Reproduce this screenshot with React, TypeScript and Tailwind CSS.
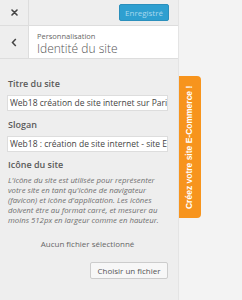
import React from "react";

export default function App() {
  return (
    <div
      className="w-[242px] h-[300px] flex bg-[#f3f3f3] overflow-hidden"
      style={{ fontFamily: '"Open Sans", "Liberation Sans", sans-serif' }}
    >
      {/* Left customizer panel */}
      <div className="w-[178px] h-full bg-[#eeeeee] flex flex-col shrink-0">
        {/* Top bar */}
        <div className="h-[26px] flex items-center border-b border-[#dddddd] shrink-0">
          <div className="w-[29px] h-full flex items-center justify-center border-r border-[#dddddd]">
            <svg width="7" height="7" viewBox="0 0 7 7">
              <path d="M1 1 L6 6 M6 1 L1 6" stroke="#444" strokeWidth="1.6" strokeLinecap="round" />
            </svg>
          </div>
          <div className="flex-1" />
          <div className="mr-[9px] w-[50px] h-[17px] rounded-[2px] bg-[#2e9fd0] border border-[#2a8fbc] flex items-center justify-center text-[8px] text-[#a8d8ee]">
            Enregistré
          </div>
        </div>
        {/* Header */}
        <div className="h-[33px] flex border-b border-[#dddddd] shrink-0">
          <div className="w-[29px] h-full flex items-center justify-center border-r border-[#dddddd]">
            <svg width="6" height="9" viewBox="0 0 6 9">
              <path d="M4.8 1 L1.5 4.5 L4.8 8" stroke="#444" strokeWidth="1.5" fill="none" />
            </svg>
          </div>
          <div className="flex-1 bg-white pl-[8px] pt-[6px] flex flex-col">
            <span className="text-[7.5px] leading-[9px] text-[#666]">Personnalisation</span>
            <span className="text-[12px] leading-[15px] font-light text-[#555]">Identité du site</span>
          </div>
        </div>
        {/* Content */}
        <div className="flex flex-col pl-[7px] pr-[10px] pt-[19px]">
          <div className="text-[9px] leading-[12px] font-semibold text-[#5a5a5a] pl-[1px]">Titre du site</div>
          <div className="mt-[5px] h-[16px] bg-white border border-[#dddddd] flex items-center pl-[2px] overflow-hidden whitespace-nowrap text-[8.5px] text-[#444]">
            Web18 création de site internet sur Paris
          </div>
          <div className="mt-[8px] text-[9px] leading-[12px] font-semibold text-[#5a5a5a] pl-[1px]">Slogan</div>
          <div className="mt-[5px] h-[16px] bg-white border border-[#dddddd] flex items-center pl-[2px] overflow-hidden whitespace-nowrap text-[8.5px] text-[#444]">
            Web18 : création de site internet - site E-Commerce
          </div>
          <div className="mt-[7px] text-[9px] leading-[12px] font-semibold text-[#5a5a5a] pl-[1px]">Icône du site</div>
          <div className="mt-[4px] pl-[1px] text-[7.8px] leading-[10px] italic text-[#6f6f6f] whitespace-nowrap">
            L'icône du site est utilisée pour représenter
            <br />
            votre site en tant qu'icône de navigateur
            <br />
            (favicon) et icône d'application. Les icônes
            <br />
            doivent être au format carré, et mesurer au
            <br />
            moins 512px en largeur comme en hauteur.
          </div>
          <div className="mt-[14px] text-center text-[8px] leading-[10px] text-[#666]">Aucun fichier sélectionné</div>
          <div className="mt-[13px] flex justify-end">
            <div className="w-[78px] h-[17px] bg-[#f7f7f7] border border-[#cccccc] rounded-[2px] flex items-center justify-center text-[8px] text-[#555]">
              Choisir un fichier
            </div>
          </div>
        </div>
      </div>
      {/* Right area */}
      <div className="flex-1 h-full pt-[76px] border-l border-[#e4e4e4]">
        <div className="w-[22px] h-[142px] bg-[#f7941d] rounded-r-[4px] flex items-center justify-center">
          <span
            className="text-white text-[8.5px] font-bold whitespace-nowrap -rotate-90"
            style={{ fontFamily: '"Liberation Sans", Arial, sans-serif' }}
          >
            Créez votre site E-Commerce !
          </span>
        </div>
      </div>
    </div>
  );
}
